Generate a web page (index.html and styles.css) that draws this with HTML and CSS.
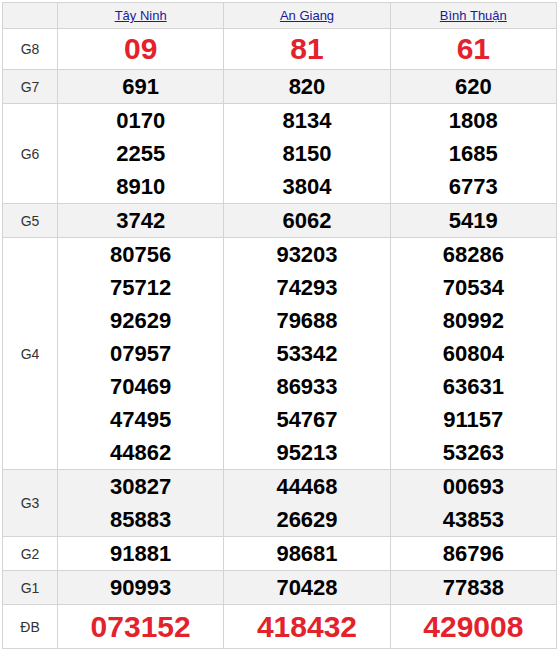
FILE: index.html
```html
<!DOCTYPE html>
<html lang="vi">
<head>
<meta charset="utf-8">
<link rel="stylesheet" href="styles.css">
</head>
<body>
<table class="kq">
  <colgroup>
    <col class="c-label"><col class="c-prov"><col class="c-prov"><col class="c-prov">
  </colgroup>
  <thead>
    <tr class="head">
      <th></th>
      <th><a href="#">Tây Ninh</a></th>
      <th><a href="#">An Giang</a></th>
      <th><a href="#">Bình Thuận</a></th>
    </tr>
  </thead>
  <tbody>
    <tr class="g8"><td class="lbl">G8</td><td><div class="red big">09</div></td><td><div class="red big">81</div></td><td><div class="red big">61</div></td></tr>
    <tr class="alt"><td class="lbl">G7</td><td><div>691</div></td><td><div>820</div></td><td><div>620</div></td></tr>
    <tr><td class="lbl">G6</td>
      <td><div>0170</div><div>2255</div><div>8910</div></td>
      <td><div>8134</div><div>8150</div><div>3804</div></td>
      <td><div>1808</div><div>1685</div><div>6773</div></td></tr>
    <tr class="alt"><td class="lbl">G5</td><td><div>3742</div></td><td><div>6062</div></td><td><div>5419</div></td></tr>
    <tr><td class="lbl">G4</td>
      <td><div>80756</div><div>75712</div><div>92629</div><div>07957</div><div>70469</div><div>47495</div><div>44862</div></td>
      <td><div>93203</div><div>74293</div><div>79688</div><div>53342</div><div>86933</div><div>54767</div><div>95213</div></td>
      <td><div>68286</div><div>70534</div><div>80992</div><div>60804</div><div>63631</div><div>91157</div><div>53263</div></td></tr>
    <tr class="alt"><td class="lbl">G3</td>
      <td><div>30827</div><div>85883</div></td>
      <td><div>44468</div><div>26629</div></td>
      <td><div>00693</div><div>43853</div></td></tr>
    <tr><td class="lbl">G2</td><td><div>91881</div></td><td><div>98681</div></td><td><div>86796</div></td></tr>
    <tr class="alt"><td class="lbl">G1</td><td><div>90993</div></td><td><div>70428</div></td><td><div>77838</div></td></tr>
    <tr class="db"><td class="lbl">ĐB</td><td><div class="red huge">073152</div></td><td><div class="red huge">418432</div></td><td><div class="red huge">429008</div></td></tr>
  </tbody>
</table>
</body>
</html>
```
FILE: styles.css
```css
body {
  margin: 2px;
  background: #fff;
  font-family: "Liberation Sans", Arial, sans-serif;
}
.kq {
  border-collapse: collapse;
  width: 555px;
  table-layout: fixed;
}
.c-label { width: 55px; }
.kq th, .kq td {
  border: 1px solid #d4d4d4;
  padding: 0;
  text-align: center;
  vertical-align: middle;
}
.head th {
  background: #f2f2f2;
  height: 25px;
  font-weight: normal;
  font-size: 13px;
}
.head a {
  color: #1a1a9e;
  text-decoration: underline;
}
.alt td { background: #f2f2f2; }
.lbl {
  font-size: 14px;
  color: #333;
}
.kq td div {
  font-size: 22px;
  font-weight: bold;
  line-height: 33px;
  color: #000;
}
.kq td div.big {
  font-size: 30px;
  line-height: 40px;
}
.kq td div.huge {
  font-size: 30px;
  line-height: 43px;
}
.kq td div.red { color: #e3232c; }
```
